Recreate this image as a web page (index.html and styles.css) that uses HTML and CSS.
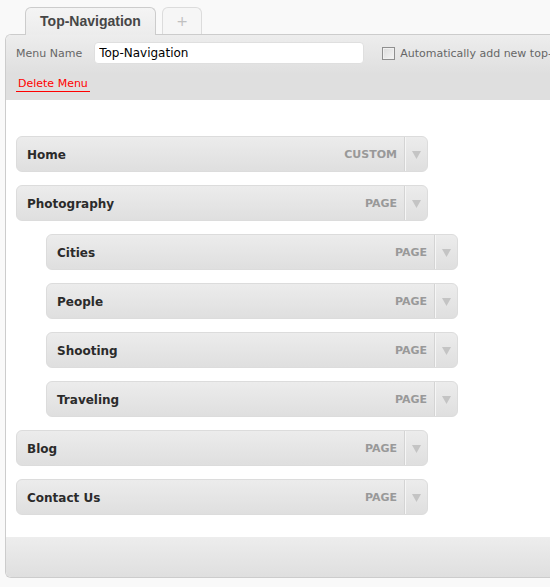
FILE: index.html
```html
<!DOCTYPE html>
<html lang="en">
<head>
<meta charset="utf-8">
<title>Menus</title>
<link rel="stylesheet" href="styles.css">
</head>
<body>
<div class="page">
  <div class="tabs">
    <div class="tab tab-active">Top-Navigation</div>
    <div class="tab tab-add">+</div>
  </div>
  <div class="panel">
    <div class="panel-header">
      <div class="name-row">
        <label class="name-label" for="menu-name">Menu Name</label>
        <input class="name-input" id="menu-name" type="text" value="Top-Navigation">
        <label class="auto-add"><span class="checkbox"></span><span class="auto-text">Automatically add new top-level pages</span></label>
      </div>
      <div class="delete-row"><a class="delete-link">Delete Menu</a></div>
    </div>
    <div class="panel-body">
      <ul class="menu">
        <li class="item"><span class="item-title">Home</span><span class="item-type">CUSTOM</span><span class="item-handle"><svg class="arrow" width="9" height="8" viewBox="0 0 9 8"><polygon points="0,0 9,0 4.5,8"/></svg></span></li>
        <li class="item"><span class="item-title">Photography</span><span class="item-type">PAGE</span><span class="item-handle"><svg class="arrow" width="9" height="8" viewBox="0 0 9 8"><polygon points="0,0 9,0 4.5,8"/></svg></span></li>
        <li class="item item-sub"><span class="item-title">Cities</span><span class="item-type">PAGE</span><span class="item-handle"><svg class="arrow" width="9" height="8" viewBox="0 0 9 8"><polygon points="0,0 9,0 4.5,8"/></svg></span></li>
        <li class="item item-sub"><span class="item-title">People</span><span class="item-type">PAGE</span><span class="item-handle"><svg class="arrow" width="9" height="8" viewBox="0 0 9 8"><polygon points="0,0 9,0 4.5,8"/></svg></span></li>
        <li class="item item-sub"><span class="item-title">Shooting</span><span class="item-type">PAGE</span><span class="item-handle"><svg class="arrow" width="9" height="8" viewBox="0 0 9 8"><polygon points="0,0 9,0 4.5,8"/></svg></span></li>
        <li class="item item-sub"><span class="item-title">Traveling</span><span class="item-type">PAGE</span><span class="item-handle"><svg class="arrow" width="9" height="8" viewBox="0 0 9 8"><polygon points="0,0 9,0 4.5,8"/></svg></span></li>
        <li class="item"><span class="item-title">Blog</span><span class="item-type">PAGE</span><span class="item-handle"><svg class="arrow" width="9" height="8" viewBox="0 0 9 8"><polygon points="0,0 9,0 4.5,8"/></svg></span></li>
        <li class="item"><span class="item-title">Contact Us</span><span class="item-type">PAGE</span><span class="item-handle"><svg class="arrow" width="9" height="8" viewBox="0 0 9 8"><polygon points="0,0 9,0 4.5,8"/></svg></span></li>
      </ul>
    </div>
    <div class="panel-footer"></div>
  </div>
</div>
</body>
</html>
```

FILE: styles.css
```css
html, body {
  margin: 0;
  padding: 0;
  background: #f9f9f9;
  overflow: hidden;
}

body {
  font-family: "DejaVu Sans", Verdana, sans-serif;
  font-size: 11px;
  color: #333;
}

.page {
  width: 620px;
  padding: 7px 0 0 5px;
}

.tabs {
  display: flex;
  align-items: flex-start;
  gap: 6px;
  padding-left: 20px;
  margin-bottom: -1px;
  position: relative;
  z-index: 1;
}

.tab {
  box-sizing: border-box;
  border: 1px solid #ccc;
  border-bottom: none;
  border-radius: 6px 6px 0 0;
  display: flex;
  align-items: center;
  justify-content: center;
}

.tab-active {
  width: 131px;
  height: 28px;
  padding-bottom: 2px;
  background: linear-gradient(#f4f4f4, #ececec);
  font-family: "Liberation Sans", Arial, sans-serif;
  font-weight: bold;
  font-size: 14px;
  color: #464646;
}

.tab-add {
  width: 40px;
  height: 27px;
  padding-bottom: 1px;
  border-color: #dcdcdc;
  background: #f6f6f6;
  font-size: 14px;
  color: #c0c0c0;
}

.panel {
  border: 1px solid #ccc;
  border-right: none;
  border-radius: 6px 0 0 6px;
  background: #fff;
  overflow: hidden;
}

.panel-header {
  box-sizing: border-box;
  height: 65px;
  padding: 7px 0 0 10px;
  background: linear-gradient(#ededed, #dfdfdf 60%);
}

.name-row {
  display: flex;
  align-items: center;
  height: 22px;
  white-space: nowrap;
}

.name-label {
  color: #666;
  font-size: 11px;
  margin-right: 12px;
}

.name-input {
  box-sizing: border-box;
  width: 270px;
  height: 22px;
  margin: 0;
  padding: 0 4px;
  border: 1px solid #dfdfdf;
  border-radius: 4px;
  background: #fff;
  font-family: "DejaVu Sans", Verdana, sans-serif;
  font-size: 12px;
  color: #000;
  outline: none;
}

.auto-add {
  display: flex;
  align-items: center;
  margin-left: 18px;
  color: #666;
  font-size: 11px;
}

.checkbox {
  box-sizing: border-box;
  width: 13px;
  height: 13px;
  margin-right: 5px;
  border: 1px solid #8f8f8f;
  background: linear-gradient(135deg, #dcdcdc, #f4f4f4);
  box-shadow: inset 0 0 0 1px #f0f0f0;
}

.delete-link {
  display: inline-block;
  margin-top: 13px;
  padding: 0 2px 1px;
  line-height: 13px;
  font-size: 11px;
  color: #f00;
  border-bottom: 1px solid #f00;
}

.panel-body {
  padding: 36px 0 22px 10px;
}

.menu {
  list-style: none;
  margin: 0;
  padding: 0;
  display: flex;
  flex-direction: column;
  gap: 13px;
}

.item {
  box-sizing: border-box;
  width: 412px;
  height: 36px;
  border: 1px solid #dcdcdc;
  border-radius: 6px;
  background: linear-gradient(#ececec, #dfdfdf);
  display: flex;
  align-items: center;
}

.item-sub {
  margin-left: 30px;
}

.item-title {
  flex: 1;
  padding: 1px 0 0 10px;
  font-weight: bold;
  font-size: 12px;
  color: #2b2b2b;
}

.item-type {
  margin-right: 7px;
  font-weight: bold;
  font-size: 11px;
  color: #999;
}

.item-handle {
  align-self: stretch;
  width: 22px;
  padding-top: 1px;
  border-left: 1px solid #d4d4d4;
  box-shadow: inset 1px 0 0 #f6f6f6;
  display: flex;
  align-items: center;
  justify-content: center;
}

.arrow {
  display: block;
  fill: #c4c4c4;
}

.panel-footer {
  height: 40px;
  background: linear-gradient(#ededed, #dfdfdf);
}
```
